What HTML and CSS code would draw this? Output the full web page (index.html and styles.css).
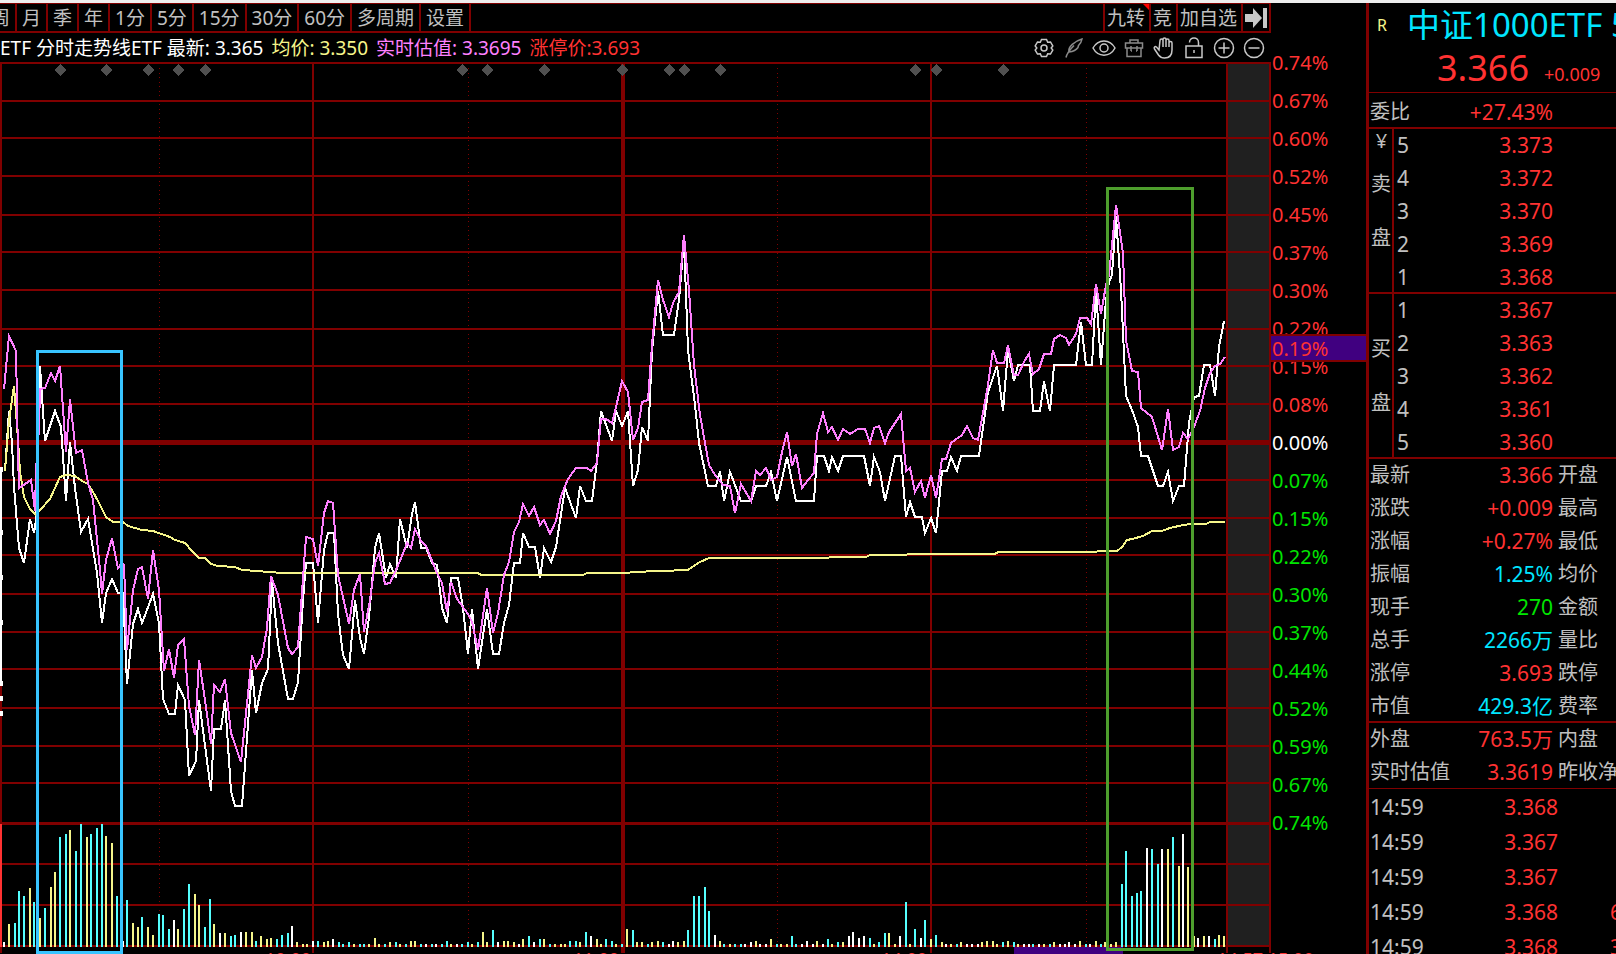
FILE: index.html
```html
<!DOCTYPE html>
<html lang="zh-CN">
<head>
  <meta charset="UTF-8">
  <title>中证1000ETF 分时走势</title>
  <link rel="stylesheet" href="styles.css">
</head>
<body>
  <main class="terminal">
    <section class="chart">
      <!-- Period toolbar -->
      <nav class="toolbar">
        <div class="periods">
          <button>周</button>
          <button>月</button>
          <button>季</button>
          <button>年</button>
          <button>1分</button>
          <button>5分</button>
          <button>15分</button>
          <button>30分</button>
          <button>60分</button>
          <button>多周期</button>
          <button>设置</button>
        </div>
        <div class="actions">
          <button class="flagged">九转</button>
          <button>竞</button>
          <button>加自选</button>
          <button class="collapse" aria-label="收起">
            <svg width="24" height="20" viewBox="0 0 24 20"><path d="M1 6h8V0l9 10-9 10v-6H1z M19 0h4v20h-4z" fill="#c8c8c8"/></svg>
          </button>
        </div>
      </nav>

      <!-- Legend and drawing tools -->
      <div class="status">
        <p class="legend">
          <span class="white">ETF 分时走势线ETF 最新: 3.365</span>
          <span class="yellow">均价: 3.350</span>
          <span class="pink">实时估值: 3.3695</span>
          <span class="red">涨停价:3.693</span>
        </p>
        <div class="tools">
          <button aria-label="设置"><svg viewBox="0 0 24 24"><path d="M9.500 3.500h5l1.200 2.700 2.800-.2 2.300 4-1.600 2 1.600 2-2.300 4-2.800-.2-1.200 2.700h-5l-1.200-2.700-2.800.2-2.300-4 1.600-2-1.600-2 2.300-4 2.800.2z"/><circle cx="12" cy="12" r="3"/></svg></button>
          <button aria-label="画线" class="dim"><svg viewBox="0 0 24 24"><path d="M4 21.500c1-5 4-8 8-12M7 16c-1.500-5 6-11 13-13-.5 3-2 5-3.500 6.500l-.5 2c-2 3-4 4-9 4.500z"/></svg></button>
          <button aria-label="显示"><svg viewBox="0 0 24 24"><path d="M1 12c5-9.500 17-9.500 22 0-5 9.500-17 9.500-22 0z"/><circle cx="12" cy="12" r="4"/></svg></button>
          <button aria-label="工具箱" class="dim"><svg viewBox="0 0 24 24"><path d="M8 7V4h8v3M3.500 7h17v5h-17zM5 12v8.500h14V12M9 10v5M15 10v5M9 15h1M14 15h1"/></svg></button>
          <button aria-label="拖动"><svg viewBox="0 0 24 24"><path d="M7 14L4.500 11c-1.500-1-3 .5-2 2l4 6c1.500 2 3 3 6 3 5 0 7.500-3 7.500-8V7c0-2-3-2-3 0v4V4.500c0-2-3-2-3 0V11 3.500c0-2-3-2-3 0V11 4.500c0-2-3-2-3 0z"/></svg></button>
          <button aria-label="锁定"><svg viewBox="0 0 24 24"><path d="M4 10h16v11.500H4zM7.500 6.500c0-6 9-6 9 0V10M12 14v3"/></svg></button>
          <button aria-label="放大"><svg viewBox="0 0 24 24"><circle cx="12" cy="12" r="9.500"/><path d="M6.500 12h11M12 6.500v11"/></svg></button>
          <button aria-label="缩小"><svg viewBox="0 0 24 24"><circle cx="12" cy="12" r="9.500"/><path d="M6.500 12h11"/></svg></button>
        </div>
      </div>

      <!-- Filled in by chart.js -->
      <svg class="plot" id="plot" viewBox="0 62 1271 892" preserveAspectRatio="none" shape-rendering="crispEdges"></svg>

      <div class="times">
        <span>10:00</span>
        <span>11:00</span>
        <span>14:00</span>
        <span></span>
        <span>14:57 15:00</span>
      </div>
    </section>

    <!-- Percent scale -->
    <aside class="scale">
      <ol>
        <li class="red">0.74%</li>
        <li class="red">0.67%</li>
        <li class="red">0.60%</li>
        <li class="red">0.52%</li>
        <li class="red">0.45%</li>
        <li class="red">0.37%</li>
        <li class="red">0.30%</li>
        <li class="red">0.22%</li>
        <li class="red">0.15%</li>
        <li class="red">0.08%</li>
        <li class="white">0.00%</li>
        <li class="green">0.07%</li>
        <li class="green">0.15%</li>
        <li class="green">0.22%</li>
        <li class="green">0.30%</li>
        <li class="green">0.37%</li>
        <li class="green">0.44%</li>
        <li class="green">0.52%</li>
        <li class="green">0.59%</li>
        <li class="green">0.67%</li>
        <li class="green">0.74%</li>
      </ol>
      <div class="cursor-tag red">0.19%</div>
    </aside>

    <!-- Quote panel -->
    <section class="quote">
      <header>
        <div class="title"><span class="tag">R</span><h1>中证1000ETF 5</h1></div>
        <div class="price red"><strong>3.366</strong><span>+0.009</span></div>
      </header>

      <div class="ratio"><span>委比</span><span class="value red">+27.43%</span></div>

      <div class="book">
        <div class="side"><span class="yen">¥</span><span>卖</span><span>盘</span></div>
        <table>
          <tr><th>5</th><td>3.373</td></tr>
          <tr><th>4</th><td>3.372</td></tr>
          <tr><th>3</th><td>3.370</td></tr>
          <tr><th>2</th><td>3.369</td></tr>
          <tr><th>1</th><td>3.368</td></tr>
        </table>
      </div>
      <div class="book">
        <div class="side buy"><span>买</span><span>盘</span></div>
        <table>
          <tr><th>1</th><td>3.367</td></tr>
          <tr><th>2</th><td>3.363</td></tr>
          <tr><th>3</th><td>3.362</td></tr>
          <tr><th>4</th><td>3.361</td></tr>
          <tr><th>5</th><td>3.360</td></tr>
        </table>
      </div>

      <table class="stats">
        <tr><th>最新</th><td class="red">3.366</td><th>开盘</th></tr>
        <tr><th>涨跌</th><td class="red">+0.009</td><th>最高</th></tr>
        <tr><th>涨幅</th><td class="red">+0.27%</td><th>最低</th></tr>
        <tr><th>振幅</th><td class="cyan">1.25%</td><th>均价</th></tr>
        <tr><th>现手</th><td class="green">270</td><th>金额</th></tr>
        <tr><th>总手</th><td class="cyan">2266万</td><th>量比</th></tr>
        <tr><th>涨停</th><td class="red">3.693</td><th>跌停</th></tr>
        <tr><th>市值</th><td class="cyan">429.3亿</td><th>费率</th></tr>
      </table>
      <table class="stats thin">
        <tr><th>外盘</th><td class="red">763.5万</td><th>内盘</th></tr>
        <tr><th>实时估值</th><td class="red">3.3619</td><th>昨收净</th></tr>
      </table>

      <table class="ticks">
        <tr><th>14:59</th><td>3.368</td><td></td></tr>
        <tr><th>14:59</th><td>3.367</td><td></td></tr>
        <tr><th>14:59</th><td>3.367</td><td></td></tr>
        <tr><th>14:59</th><td>3.368</td><td class="volume">6</td></tr>
        <tr><th>14:59</th><td>3.368</td><td class="volume">3</td></tr>
      </table>
    </section>
  </main>

  <script src="chart.js"></script>
</body>
</html>
```
FILE: styles.css
```css
* {
  box-sizing: border-box;
}

body {
  margin: 0;
  height: 100vh;
  overflow: hidden;
  background: #000;
  border-top: 3px solid #eee;
  color: #c0c0c0;
  font-family: "Noto Sans", "Noto Sans CJK SC", sans-serif;
  font-size: 20px;
  line-height: 20px;
}

.red { color: #ff3232; }
.green { color: #00e600; }
.cyan { color: #00e5ff; }
.white { color: #fff; }
.yellow { color: #f5f58a; }
.pink { color: #ff80ff; }

button {
  margin: 0;
  padding: 0;
  background: none;
  border: none;
  color: inherit;
  font: inherit;
  cursor: pointer;
}

.terminal {
  display: grid;
  grid-template-columns: minmax(0, 1fr) 95px 250px;
}

/* Toolbar */
.toolbar {
  display: flex;
  justify-content: space-between;
  height: 30px;
  border-top: 1px solid #800000;
  border-bottom: 2px solid #800000;
  overflow: hidden;
}

.periods,
.actions {
  display: flex;
}

.periods {
  margin-left: -14px;
}

.toolbar button {
  border-right: 2px solid #800000;
  font-size: 19px;
  white-space: nowrap;
}

.periods button {
  padding: 0 5px;
}

.actions {
  border-left: 2px solid #800000;
}

.actions button {
  padding: 0 4px 0 2px;
}

.actions .collapse {
  padding: 0 1px;
}

.collapse svg {
  display: block;
}

.flagged {
  position: relative;
}

.flagged::after {
  content: "";
  position: absolute;
  top: 0;
  right: 0;
  border-top: 6px solid #ff0000;
  border-left: 6px solid transparent;
}

/* Legend row */
.status {
  display: flex;
  justify-content: space-between;
  align-items: center;
  height: 29px;
}

.legend {
  margin: 0;
  font-size: 19px;
  white-space: nowrap;
}

.legend span {
  margin-right: 3px;
}

.tools {
  display: flex;
  padding-right: 2px;
}

.tools button {
  width: 30px;
  height: 24px;
}

.tools svg {
  display: block;
  width: 24px;
  height: 24px;
  margin: 0 auto;
  fill: none;
  stroke: #c8c8c8;
  stroke-width: 1.5;
}

.tools .dim svg {
  stroke: #8a8a8a;
}

/* Plot */
.plot {
  display: block;
  width: 100%;
  height: 892px;
}

.grid-line {
  stroke: #800000;
  stroke-width: 2;
}

.grid-line.axis { stroke-width: 5; }
.grid-line.noon { stroke-width: 4; }
.grid-line.base { stroke-width: 3; }

.grid-line.half {
  stroke-width: 1;
  stroke-dasharray: 1 4 1 3;
}

.closed { fill: #202020; }
.marker { fill: #505050; }
.edge-price { fill: #fff; }
.edge-volume { fill: #ff3232; }
.time-cursor { fill: #400080; }

.line {
  fill: none;
  stroke-width: 2;
}

.line.price { stroke: #fff; }
.line.average { stroke: #f5f58a; }
.line.estimate { stroke: #ff80ff; }

.bar.w { fill: #fff; }
.bar.y { fill: #f5f58a; }
.bar.c { fill: #55ffff; }

.frame {
  fill: none;
  stroke-width: 3;
}

.frame.morning { stroke: #38c4ff; }
.frame.close { stroke: #4e9e2d; }

.times {
  display: grid;
  grid-template-columns: 311fr 308fr 308fr 290fr minmax(0, 54fr);
  margin-top: -5px;
  color: #ff3232;
  font-size: 18px;
  text-align: right;
  white-space: nowrap;
}

.times span:last-child {
  text-align: left;
}

/* Percent scale */
.scale {
  position: relative;
  padding-top: 41px;
}

.scale ol {
  margin: 0;
  padding: 0 0 0 1px;
  list-style: none;
}

.scale li {
  height: 38px;
  line-height: 38px;
}

.cursor-tag {
  position: absolute;
  top: 331px;
  left: 0;
  width: 100%;
  height: 28px;
  padding-left: 1px;
  border: solid #800000;
  border-width: 2px 0;
  background: #400080;
  line-height: 26px;
}

/* Quote panel */
.quote {
  height: 951px;
  overflow: hidden;
  border-left: 3px solid #800000;
  white-space: nowrap;
}

.quote header {
  height: 90px;
  border-bottom: 1px solid #800000;
}

.title {
  display: flex;
  align-items: center;
  height: 44px;
  padding-left: 8px;
}

.title .tag {
  flex: none;
  width: 30px;
  color: #f5f58a;
  font-size: 16px;
}

.title h1 {
  margin: 0;
  color: #00e5ff;
  font-size: 33px;
  font-weight: normal;
}

.price {
  display: flex;
  align-items: baseline;
  gap: 15px;
  padding: 9px 0 0 68px;
}

.price strong {
  font-size: 36px;
  font-weight: normal;
  line-height: 24px;
}

.price span {
  font-size: 18px;
}

.ratio {
  display: flex;
  justify-content: space-between;
  align-items: center;
  height: 36px;
  padding: 1px 63px 0 1px;
  box-shadow: inset 0 -2px #800000;
}

.ratio .value {
  font-size: 21px;
}

.book {
  display: flex;
  height: 165px;
  box-shadow: inset 0 -2px #800000;
}

.side {
  display: flex;
  flex-direction: column;
  gap: 34px;
  width: 25px;
  padding-left: 2px;
  border-right: 2px solid #800000;
}

.side.buy {
  padding-top: 45px;
}

.side .yen {
  height: 45px;
  margin-bottom: -34px;
  line-height: 24px;
  text-align: center;
}

table {
  border-collapse: collapse;
  table-layout: fixed;
}

th,
td {
  padding: 0;
  font-weight: normal;
}

th {
  text-align: left;
}

td {
  font-size: 21px;
  text-align: right;
}

.book tr,
.stats tr {
  height: 33px;
}

.book th,
.book td,
.stats th,
.stats td {
  padding-bottom: 2px;
}

.book table {
  width: 159px;
}

.book th {
  width: 20px;
  padding-left: 3px;
  font-size: 21px;
}

.book td,
.ticks td {
  color: #ff3232;
}

.stats {
  width: 100%;
  box-shadow: inset 0 -2px #800000;
}

.stats.thin {
  box-shadow: inset 0 -1px #800000;
}

.stats th:first-child {
  width: 84px;
  padding-left: 1px;
}

.stats td {
  width: 100px;
}

.stats th:last-child {
  padding-left: 5px;
}

.ticks {
  width: 100%;
}

.ticks tr {
  height: 35px;
}

.ticks th {
  width: 84px;
  padding-left: 1px;
  font-size: 21px;
}

.ticks td {
  width: 105px;
}

.ticks .volume {
  padding-left: 52px;
  text-align: left;
}
```
FILE: chart.js
```js
const plot = document.getElementById('plot');

const rows = [63, 101, 138, 176, 215, 252, 290, 329, 366, 404, 480, 518, 555, 594, 632, 669, 708, 746, 783, 864, 905, 946];
const hours = [1, 313, 931, 1227, 1270];
const halves = [159, 468, 777, 1086];
const markers = [60, 106, 148, 178, 205, 462, 487, 544, 622, 669, 684, 720, 915, 936, 1003];

// x,y pairs
const price = `5,471 9,411 12,443 14,487 19,548 24,563 30,519 34,533 36,520 40,366 45,441 55,411 61,427 66,501 70,442 75,488 81,532
88,519 97,573 102,623 106,593 112,579 118,593 123,593 127,684 133,624 138,609 142,623 153,594 159,623 163,699 169,714 175,714
178,685 185,700 189,776 196,761 199,700 211,791 214,729 221,729 225,700 231,791 235,806 242,806 252,670 256,713 262,683 268,669
272,582 278,643 288,699 293,699 298,682 303,600 306,563 313,563 318,623 324,550 328,533 334,533 338,614 343,655 349,669 355,600
360,638 364,654 369,617 375,548 379,533 386,578 390,564 396,578 400,519 407,548 412,514 415,502 421,548 426,548 432,563 437,565
442,608 447,623 451,578 458,578 463,608 468,654 472,609 478,669 487,609 493,654 499,654 504,623 509,605 514,563 520,563 523,533
529,547 535,547 540,578 544,548 551,562 556,547 565,488 576,518 580,486 586,501 592,501 597,461 601,411 612,441 616,411 622,426
628,411 633,486 638,470 642,427 648,441 652,351 658,291 663,335 674,335 679,300 684,240 688,350 695,405 699,443 708,486 716,486
720,471 724,501 730,472 741,501 751,501 756,486 766,486 771,472 777,501 787,457 796,501 814,501 817,456 824,456 829,471 832,457
838,471 843,456 864,456 870,486 874,457 880,472 885,501 895,456 901,456 906,517 910,502 915,517 922,517 925,533 931,518 936,533
942,471 947,471 951,457 957,471 961,456 979,456 988,392 997,366 1003,411 1008,350 1014,381 1018,365 1030,365 1033,411 1040,411
1044,381 1050,411 1054,365 1076,365 1081,322 1086,365 1092,365 1096,290 1101,365 1106,300 1109,282 1112,275 1116,216 1121,290
1126,396 1132,410 1138,427 1141,456 1148,456 1158,486 1163,486 1168,472 1173,501 1179,486 1184,486 1189,423 1194,397 1199,396
1204,365 1210,365 1215,396 1219,347 1224,321`;

const estimate = `4,389 9,336 16,351 18,453 19,488 25,484 31,480 35,511 36,470 39,429 40,389 45,388 51,373 55,381 60,366 66,452 70,399
76,453 82,450 88,483 93,500 100,570 102,594 106,560 112,538 118,568 122,563 124,565 127,650 133,590 138,569 142,567 148,599
153,550 159,590 164,671 169,649 174,678 178,645 184,639 189,706 195,735 199,660 205,700 211,744 214,685 220,692 225,679 231,733
241,762 252,655 256,668 262,657 267,628 271,576 278,595 288,648 292,654 298,647 306,537 313,539 318,566 324,513 328,501 333,503
338,575 349,624 354,590 360,574 364,632 370,600 375,563 379,553 385,584 390,583 400,561 407,543 411,548 415,529 421,541 426,546
437,573 442,583 447,612 451,582 457,599 468,614 472,622 478,650 487,588 493,633 498,613 504,575 509,562 514,532 519,522 523,504
529,516 534,507 540,525 544,520 550,534 556,521 561,496 568,479 576,468 587,468 591,471 597,463 601,419 606,419 612,423 616,407
622,381 628,392 633,440 638,428 642,402 648,400 652,345 658,280 663,300 669,317 673,303 679,292 684,235 689,290 694,365 700,415
709,465 715,475 723,485 730,486 735,513 741,484 751,501 756,471 760,475 766,468 771,480 777,477 782,452 787,432 792,466 796,454
802,488 808,480 814,473 817,434 823,413 828,432 832,427 838,440 843,429 850,434 858,429 865,429 870,443 874,428 879,426 885,443
889,432 901,414 906,471 910,468 915,492 921,481 925,498 931,475 936,498 942,459 946,459 951,443 962,435 967,426 973,438 978,440
982,418 988,385 993,350 997,363 1004,363 1008,345 1014,375 1018,375 1025,360 1029,354 1033,374 1039,369 1044,354 1051,354
1054,339 1060,335 1066,338 1069,345 1076,334 1080,318 1087,318 1091,324 1096,284 1101,314 1106,285 1109,275 1116,205 1123,253
1126,340 1132,371 1138,372 1141,408 1152,417 1162,450 1168,409 1173,450 1179,447 1183,433 1188,439 1194,427 1200,411 1205,388
1210,373 1215,366 1220,364 1225,357`;

const average = `5,471 9,420 14,386 17,425 19,455 20,472 24,497 30,509 36,515 40,510 50,499 60,477 66,475 75,476 82,481 88,484 93,492
98,501 106,517 113,522 123,522 128,526 142,530 153,531 170,537 175,540 185,543 192,551 199,558 205,558 211,564 218,566 235,567
242,570 257,571 282,573 478,573 481,575 583,575 587,573 628,573 632,572 660,571 688,570 698,563 709,558 828,558 830,557 866,557
870,555 906,555 908,554 995,554 998,552 1096,552 1098,551 1117,551 1122,547 1127,540 1132,539 1143,536 1152,531 1162,531
1170,528 1183,525 1192,524 1206,524 1210,522 1225,522`;

// colour, x, height
const volume = `w4,5 y9,23 c15,24 c19,56 c24,51 y30,59 c34,45 y40,29 c45,39 y51,60 y55,75 c60,110 c66,113 y70,117 c76,96 c81,123
y87,110 c91,113 c97,119 c102,123 y106,111 y112,104 c117,51 w123,6 c127,47 y133,24 y138,20 c142,30 y148,20 y153,12 c159,33 c163,32
c169,18 w174,27 y178,18 c184,38 c189,63 y195,53 y199,42 c205,20 c210,48 y214,23 w220,14 y225,14 c231,11 c235,12 w241,15 y246,15
y252,15 c256,6 y261,11 y267,8 y271,9 c277,8 c282,12 c288,14 w292,21 y297,5 y303,3 y307,3 w313,6 c318,6 y324,5 y328,6 w333,8
c339,5 c343,3 c349,5 y354,3 c360,3 c364,3 y369,3 y375,9 y379,3 c385,3 y390,5 c396,5 y400,3 c406,3 y411,6 y415,6 c421,3 w426,3
c432,3 w436,3 c442,3 c447,6 y451,3 w457,3 c462,3 c468,5 y472,3 c478,5 y483,15 y487,5 c493,17 w498,5 y504,6 y508,6 y514,5 w519,3
y523,8 c529,11 w534,5 c540,8 y544,8 c550,3 y555,3 y561,3 y565,3 c570,6 c576,6 y580,5 c586,15 w591,11 y597,8 y601,3 c606,8 c612,6
y616,3 c622,3 y627,18 c633,17 y637,5 y642,5 c648,3 y652,5 y658,6 c663,5 w669,3 w673,6 y678,5 y684,6 c688,17 c694,51 c699,51
c705,60 c709,36 w715,12 y720,6 c724,3 y730,3 c735,3 c741,3 w745,3 w751,5 y756,6 w760,3 w766,3 y771,8 c777,3 y781,3 y787,3
c792,11 c796,3 w802,3 w807,6 w813,3 y817,6 w823,3 c828,8 y832,3 c838,5 y843,5 w849,11 w853,15 w859,9 w864,11 c870,9 y874,3
c879,5 c885,14 y889,14 y895,3 w900,11 c906,45 y910,3 c915,18 w921,9 c925,27 y931,8 c936,12 y942,5 w946,3 y951,3 c957,3 y961,5
w967,3 w972,3 w978,3 y982,5 y987,6 y993,6 y997,3 c1003,5 y1008,6 c1014,5 y1018,3 w1024,3 w1029,3 c1033,3 w1039,3 y1044,3 c1050,3
y1054,5 w1060,3 w1065,3 w1069,5 w1075,3 y1080,6 c1086,3 w1090,3 y1096,6 c1101,3 y1105,5 y1111,3 y1116,5 c1122,63 c1126,96
c1132,51 c1137,54 c1141,56 w1147,99 c1152,98 c1158,83 w1162,98 y1168,98 c1173,110 y1179,81 w1183,113 y1188,80 y1194,11 w1198,9
y1204,11 w1209,11 c1215,8 y1219,12 y1224,11`;

function rect(x, y, w, h, cls) {
  return `<rect class="${cls}" x="${x}" y="${y}" width="${w}" height="${h}"/>`;
}

function hline(y, cls = '') {
  return `<path class="grid-line ${cls}" d="M0 ${y}H1271"/>`;
}

function vline(x, cls = '') {
  return `<path class="grid-line ${cls}" d="M${x} 62V953"/>`;
}

let out = rect(1228, 64, 42, 882, 'closed');

// Grid
out += rows.map(y => hline(y)).join('');
out += hline(442.5, 'axis') + hline(823.5, 'base');
out += hours.map(x => vline(x)).join('') + vline(623, 'noon');
out += halves.map(x => `<path class="grid-line half" d="M${x + 0.5} 68V946"/>`).join('');
out += markers.map(x => `<path class="marker" d="M${x} 64l6 6-6 6-6-6z"/>`).join('');

// Opening spike on the left edge
out += rect(0, 467, 2, 218, 'edge-price');
out += [470, 533, 578, 623, 684, 699, 714].map(y => rect(0, y - 3, 3, 5, 'edge-price')).join('');
out += rect(0, 824, 2, 123, 'edge-volume');

// Volume
out += rect(1014, 947, 109, 7, 'time-cursor');
out += volume.split(/\s+/).map(item => {
  const [x, h] = item.slice(1).split(',').map(Number);
  return rect(x - 1, 947 - h, 2, h, 'bar ' + item[0]);
}).join('');

out += `<polyline class="line price" points="${price}"/>`;
out += `<polyline class="line average" points="${average}"/>`;
out += `<polyline class="line estimate" points="${estimate}"/>`;

out += rect(37.5, 351.5, 84, 601, 'frame morning');
out += rect(1107.5, 188.5, 85, 761, 'frame close');

plot.innerHTML = out;
```
